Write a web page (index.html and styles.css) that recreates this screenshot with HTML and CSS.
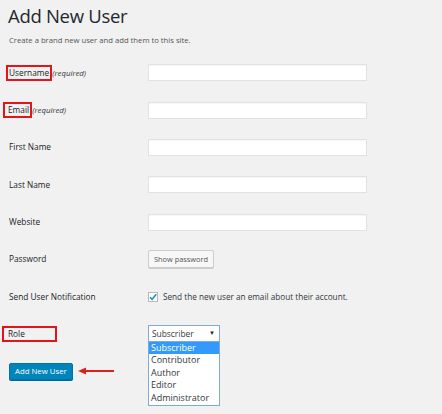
FILE: index.html
```html
<!DOCTYPE html>
<html>
<head>
<meta charset="utf-8">
<link rel="stylesheet" href="styles.css">
</head>
<body>
<div class="wrap">
  <h1 class="title">Add New User</h1>
  <p class="intro">Create a brand new user and add them to this site.</p>
  <div class="form">
    <div class="row">
      <div class="label"><span class="mark mark-user">Username</span> <em class="req">(required)</em></div>
      <div class="field"><span class="input"></span></div>
    </div>
    <div class="row">
      <div class="label"><span class="mark mark-email">Email</span> <em class="req">(required)</em></div>
      <div class="field"><span class="input"></span></div>
    </div>
    <div class="row">
      <div class="label">First Name</div>
      <div class="field"><span class="input"></span></div>
    </div>
    <div class="row">
      <div class="label">Last Name</div>
      <div class="field"><span class="input"></span></div>
    </div>
    <div class="row">
      <div class="label">Website</div>
      <div class="field"><span class="input"></span></div>
    </div>
    <div class="row">
      <div class="label">Password</div>
      <div class="field"><span class="btn-secondary">Show password</span></div>
    </div>
    <div class="row">
      <div class="label">Send User Notification</div>
      <div class="field check-field">
        <span class="checkbox"><svg width="10" height="10" viewBox="0 0 10 10"><path d="M2 5.2 L4.1 7.4 L8.2 2.2" fill="none" stroke="#1e8cbe" stroke-width="1.6"/></svg></span>
        <span class="check-text">Send the new user an email about their account.</span>
      </div>
    </div>
    <div class="row">
      <div class="label"><span class="mark mark-role">Role</span></div>
      <div class="field">
        <div class="select-wrap">
          <div class="select"><span>Subscriber</span><span class="caret">▼</span></div>
          <ul class="options">
            <li class="selected">Subscriber</li>
            <li>Contributor</li>
            <li>Author</li>
            <li>Editor</li>
            <li>Administrator</li>
          </ul>
        </div>
      </div>
    </div>
  </div>
  <div class="submit">
    <span class="btn-primary">Add New User</span>
    <svg class="arrow" width="36" height="8" viewBox="0 0 36 8"><path d="M6 4 H36" stroke="#e02020" stroke-width="2"/><path d="M0 4 L8 0.5 L8 7.5 Z" fill="#e02020"/></svg>
  </div>
</div>
</body>
</html>
```
FILE: styles.css
```css
html, body {
  margin: 0;
  padding: 0;
  background: #f1f1f1;
}
body {
  font-family: "Open Sans", "Noto Sans", sans-serif;
  color: #23282d;
}
.wrap {
  padding: 0 0 0 8px;
  min-height: 414px;
  box-sizing: border-box;
  position: relative;
}
.title {
  margin: 0;
  padding-top: 3px;
  font-size: 18.5px;
  font-weight: 400;
  line-height: 26px;
  color: #23282d;
  letter-spacing: -0.3px;
}
.intro {
  margin: 5px 0 0 1px;
  font-size: 7.7px;
  line-height: 12px;
  color: #555;
}
.form {
  margin-top: 8px;
  display: flex;
  flex-direction: column;
}
.row {
  display: grid;
  grid-template-columns: 140px 1fr;
  height: 37.35px;
  align-items: center;
}
.label {
  font-size: 8.3px;
  line-height: 12px;
  color: #1d2124;
  white-space: nowrap;
  padding-left: 1px;
}
.req {
  font-size: 7.8px;
  color: #32373c;
  margin-left: -2px;
}
.mark {
  display: inline-block;
  border: 2px solid #e3151a;
  line-height: 12px;
}
.mark-user {
  margin-left: -3px;
  padding: 0 1px 0 1px;
}
.mark-email {
  margin-left: -6px;
  padding: 0 1px 0 3px;
}
.mark-role {
  margin-left: -7px;
  padding: 0 30px 0 4px;
}
.field {
  display: flex;
  align-items: center;
}
.input {
  display: block;
  width: 217px;
  height: 15px;
  background: #fff;
  border: 1px solid #e2e2e2;
  box-shadow: inset 0 1px 1px rgba(0,0,0,0.04);
}
.btn-secondary {
  display: inline-block;
  height: 16px;
  line-height: 16px;
  padding: 0 5px;
  font-size: 7.4px;
  color: #555;
  background: #f7f7f7;
  border: 1px solid #ccc;
  border-radius: 2px;
  box-shadow: 0 1px 0 #ccc;
}
.check-field {
  gap: 5px;
}
.checkbox {
  display: inline-block;
  width: 10px;
  height: 10px;
  background: #fff;
  border: 1px solid #b4b9be;
  box-sizing: border-box;
  position: relative;
}
.checkbox svg {
  position: absolute;
  left: -1px;
  top: -1px;
}
.check-text {
  font-size: 8.2px;
  color: #32373c;
}
.select-wrap {
  position: relative;
  width: 72px;
  top: -1px;
}
.select {
  box-sizing: border-box;
  height: 17px;
  border: 1px solid #7fa9d6;
  background: #fff;
  display: flex;
  justify-content: space-between;
  align-items: center;
  padding: 0 4px 0 3px;
  font-size: 8.4px;
  color: #32373c;
}
.caret {
  font-size: 6px;
  color: #23282d;
}
.options {
  position: absolute;
  left: 0;
  top: 17px;
  width: 72px;
  box-sizing: border-box;
  margin: 0;
  padding: 0 0 1px 0;
  list-style: none;
  background: #fff;
  border: 1px solid #7fa9d6;
  border-top: none;
  font-size: 9px;
  color: #32373c;
}
.options li {
  height: 12.5px;
  line-height: 12.5px;
  padding-left: 2px;
}
.options li.selected {
  background: #3399ff;
  color: #fff;
}
.submit {
  display: flex;
  align-items: center;
  gap: 5px;
  margin-top: 10px;
  padding-left: 1px;
}
.btn-primary {
  display: inline-block;
  height: 15px;
  line-height: 15px;
  padding: 0 5px;
  font-size: 7.8px;
  color: #fff;
  background: #0085ba;
  border: 1px solid #0073aa;
  border-radius: 2px;
  box-shadow: 0 1px 0 #006799;
}
.arrow {
  display: block;
}
```
